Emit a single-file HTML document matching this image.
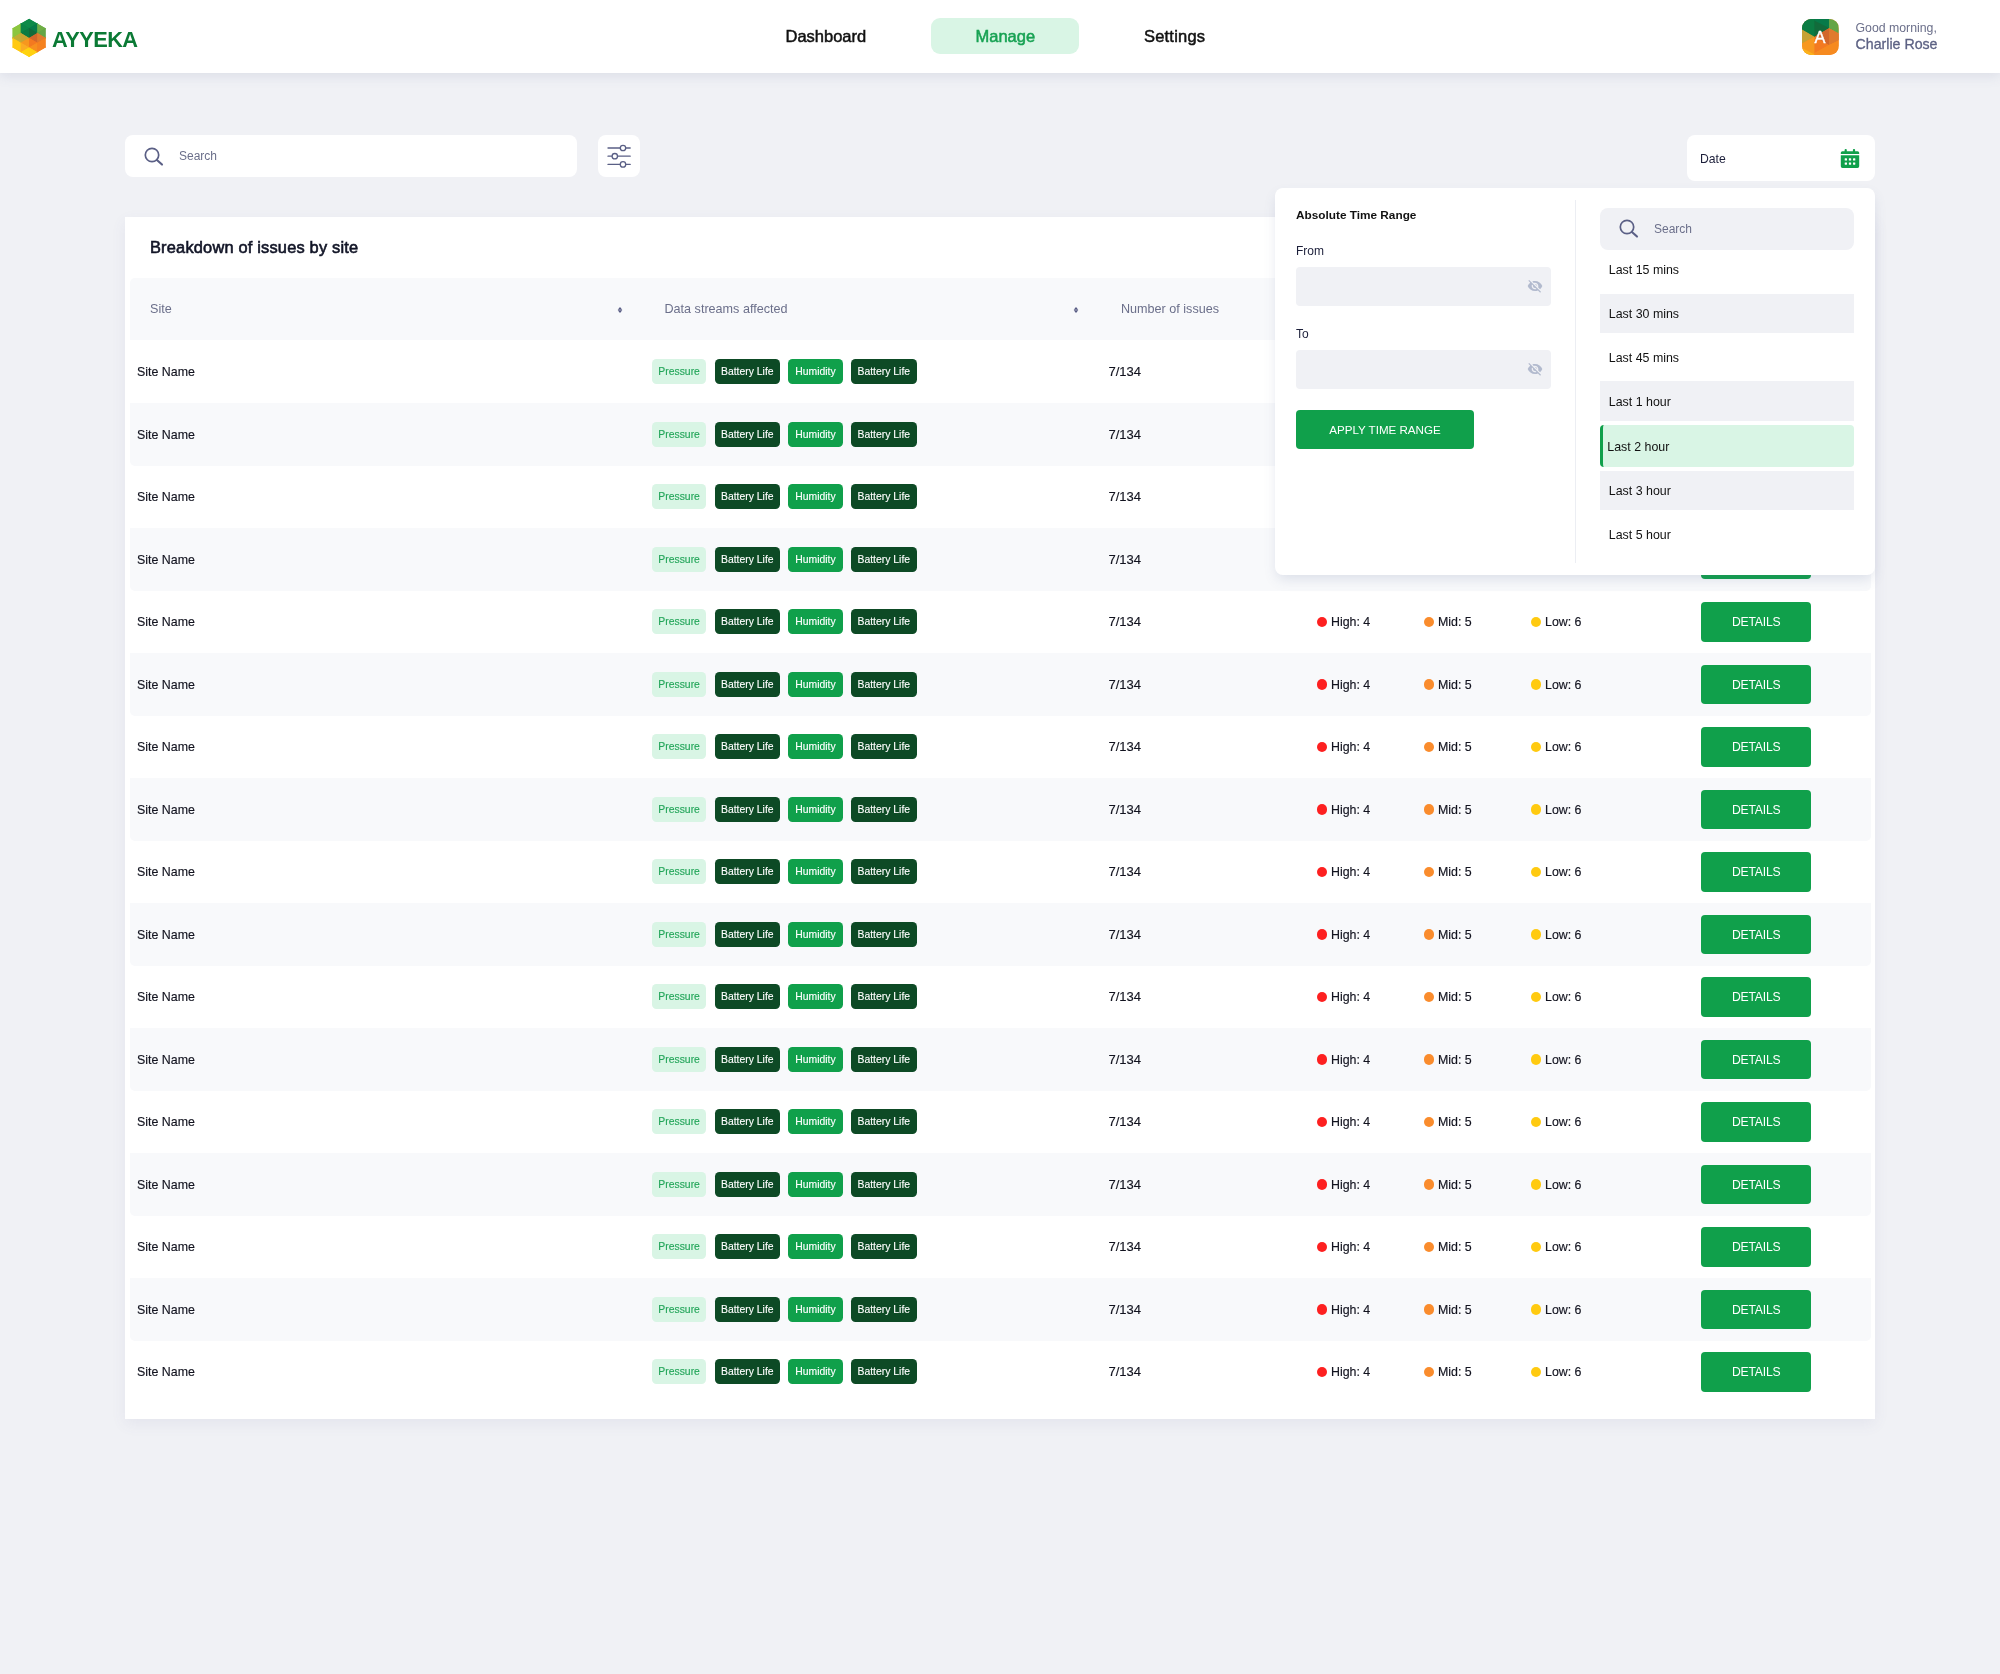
<!DOCTYPE html><html lang="en"><head><meta charset="utf-8"><title>Ayyeka - Manage</title><style>
*{box-sizing:border-box;margin:0;padding:0}
html,body{width:2000px;height:1674px;overflow:hidden}
body{background:#f0f1f5;font-family:"Liberation Sans",sans-serif;color:#15172b;position:relative;font-size:13px}
#app{position:absolute;left:0;top:0;width:2000px;height:1674px;will-change:transform}
.abs{position:absolute}
.t{position:absolute;white-space:nowrap;line-height:1}
#hdr{position:absolute;left:0;top:0;width:2000px;height:73px;background:#fff;box-shadow:0 3px 12px rgba(80,95,140,.13)}
.brand{left:52px;top:29.2px;font-size:21.8px;font-weight:bold;color:#0b7a35;letter-spacing:-.55px}
.nav{font-size:16.5px;color:#111;-webkit-text-stroke:.5px #111;top:28px}
.pill{left:931px;top:18px;width:148px;height:36px;border-radius:9px;background:#d9f5e5}
.avatar{left:1802px;top:18.9px;width:36.6px;height:36.3px;border-radius:9.5px;overflow:hidden}
.gm{left:1855.5px;top:22.4px;font-size:12.3px;color:#6b6f8a}
.nm{left:1855.5px;top:37px;font-size:14.2px;color:#5d6284;-webkit-text-stroke:.3px #5d6284}
.box{position:absolute;background:#fff;border-radius:8px}
.ph{color:#6b6f8a;font-size:12px}
#card{position:absolute;left:125.2px;top:217px;width:1749.4px;height:1202px;background:#fff;box-shadow:0 5px 14px rgba(85,90,150,.08)}
.title{left:150px;top:239px;font-size:16.4px;color:#111426;-webkit-text-stroke:.6px #111426;letter-spacing:.19px}
.thead{position:absolute;left:129.5px;top:277.8px;width:1741px;height:62.7px;background:#f8f9fb;border-radius:5px 5px 0 0}
.th{font-size:12.6px;color:#6b6f8a;top:303.2px}
.row{position:absolute;left:129.5px;width:1741px;height:62.5px}
.row.alt{background:#f8f9fb;border-radius:0 0 5px 5px}
.row .t{top:25.6px;font-size:12.4px;color:#12131f;-webkit-text-stroke:.15px #12131f}
.tag{position:absolute;top:18.8px;height:25px;border-radius:4.5px;font-size:10.4px;line-height:25.4px;-webkit-text-stroke:.12px currentColor;text-align:center;white-space:nowrap}
.tg1{background:#d9f5e5;color:#22a559}
.tg2{background:#0d4a25;color:#fff}
.tg3{background:#10a04b;color:#fff}
.dot{position:absolute;top:26.4px;width:10.4px;height:10.4px;border-radius:50%}
.btn{position:absolute;background:#10a04b;color:#fff;border-radius:4px;text-align:center;white-space:nowrap}
.det{left:1571.5px;top:11.6px;width:110.4px;height:39.6px;line-height:41.8px;font-size:12.2px;letter-spacing:-.2px}
#panel{position:absolute;left:1275px;top:187.6px;width:600px;height:387px;background:#fff;border-radius:8px;box-shadow:0 6px 13px -2px rgba(80,95,140,.17)}
.inp{position:absolute;left:1296px;width:255px;height:39px;border-radius:4px;background:#f0f1f5}
.li{position:absolute;left:1600px;width:254px;height:39.4px}
.li.g{background:#f0f1f5}
.lt{font-size:12.4px;color:#111;left:1608.8px}
</style></head><body><div id="app">
<div id="hdr"></div>
<svg class="abs" style="left:0;top:0" width="60" height="72" viewBox="0 0 60 72"><defs><clipPath id="hx"><polygon points="29.10,18.75 45.68,28.32 45.68,47.47 29.10,57.05 12.52,47.47 12.52,28.32"/></clipPath></defs>
<g clip-path="url(#hx)">
<polygon points="11.13,28.32 21.50,22.34 21.50,34.31" fill="#8cc63f"/>
<polygon points="11.82,27.13 11.82,39.10 22.19,33.11" fill="#8cc63f"/>
<polygon points="11.13,37.90 21.50,31.92 21.50,43.88" fill="#c0ae36"/>
<polygon points="11.82,36.70 11.82,48.67 22.19,42.69" fill="#ffc912"/>
<polygon points="11.13,47.47 21.50,41.49 21.50,53.46" fill="#ffc912"/>
<polygon points="19.43,23.54 29.79,17.55 29.79,29.52" fill="#0d8a48"/>
<polygon points="20.12,22.34 20.12,34.31 30.48,28.32" fill="#0b8446"/>
<polygon points="19.43,33.11 29.79,27.13 29.79,39.10" fill="#0a7a42"/>
<polygon points="20.12,31.92 20.12,43.88 30.48,37.90" fill="#c8a432"/>
<polygon points="19.43,42.69 29.79,36.70 29.79,48.67" fill="#f7971e"/>
<polygon points="20.12,41.49 20.12,53.46 30.48,47.47" fill="#fbac24"/>
<polygon points="19.43,52.26 29.79,46.28 29.79,58.25" fill="#ffd30f"/>
<polygon points="28.41,17.55 28.41,29.52 38.77,23.54" fill="#0d8a48"/>
<polygon points="27.72,28.32 38.08,22.34 38.08,34.31" fill="#077c4a"/>
<polygon points="28.41,27.13 28.41,39.10 38.77,33.11" fill="#126b3b"/>
<polygon points="27.72,37.90 38.08,31.92 38.08,43.88" fill="#d2672b"/>
<polygon points="28.41,36.70 28.41,48.67 38.77,42.69" fill="#f47920"/>
<polygon points="27.72,47.47 38.08,41.49 38.08,53.46" fill="#f78f1f"/>
<polygon points="28.41,46.28 28.41,58.25 38.77,52.26" fill="#ffd011"/>
<polygon points="36.70,22.34 36.70,34.31 47.07,28.32" fill="#6fae45"/>
<polygon points="36.01,33.11 46.38,27.13 46.38,39.10" fill="#65a646"/>
<polygon points="36.70,31.92 36.70,43.88 47.07,37.90" fill="#e07b2e"/>
<polygon points="36.01,42.69 46.38,36.70 46.38,48.67" fill="#f58220"/>
<polygon points="36.70,41.49 36.70,53.46 47.07,47.47" fill="#f58220"/>
<polygon points="12.52,28.32 20.81,23.54 20.81,33.11" fill="#8cc63f"/>
<polygon points="12.52,28.32 12.52,37.90 20.81,33.11" fill="#8cc63f"/>
<polygon points="12.52,37.90 20.81,33.11 20.81,42.69" fill="#c0ae36"/>
<polygon points="12.52,37.90 12.52,47.47 20.81,42.69" fill="#ffc912"/>
<polygon points="12.52,47.47 20.81,42.69 20.81,52.26" fill="#ffc912"/>
<polygon points="20.81,23.54 29.10,18.75 29.10,28.32" fill="#0d8a48"/>
<polygon points="20.81,23.54 20.81,33.11 29.10,28.32" fill="#0b8446"/>
<polygon points="20.81,33.11 29.10,28.32 29.10,37.90" fill="#0a7a42"/>
<polygon points="20.81,33.11 20.81,42.69 29.10,37.90" fill="#c8a432"/>
<polygon points="20.81,42.69 29.10,37.90 29.10,47.47" fill="#f7971e"/>
<polygon points="20.81,42.69 20.81,52.26 29.10,47.47" fill="#fbac24"/>
<polygon points="20.81,52.26 29.10,47.47 29.10,57.05" fill="#ffd30f"/>
<polygon points="29.10,18.75 29.10,28.32 37.39,23.54" fill="#0d8a48"/>
<polygon points="29.10,28.32 37.39,23.54 37.39,33.11" fill="#077c4a"/>
<polygon points="29.10,28.32 29.10,37.90 37.39,33.11" fill="#126b3b"/>
<polygon points="29.10,37.90 37.39,33.11 37.39,42.69" fill="#d2672b"/>
<polygon points="29.10,37.90 29.10,47.47 37.39,42.69" fill="#f47920"/>
<polygon points="29.10,47.47 37.39,42.69 37.39,52.26" fill="#f78f1f"/>
<polygon points="29.10,47.47 29.10,57.05 37.39,52.26" fill="#ffd011"/>
<polygon points="37.39,23.54 37.39,33.11 45.68,28.32" fill="#6fae45"/>
<polygon points="37.39,33.11 45.68,28.32 45.68,37.90" fill="#65a646"/>
<polygon points="37.39,33.11 37.39,42.69 45.68,37.90" fill="#e07b2e"/>
<polygon points="37.39,42.69 45.68,37.90 45.68,47.47" fill="#f58220"/>
<polygon points="37.39,42.69 37.39,52.26 45.68,47.47" fill="#f58220"/>
</g></svg>
<div class="t brand">AYYEKA</div>
<div class="abs pill"></div>
<div class="t nav" id="n1" style="left:785.5px">Dashboard</div>
<div class="t nav" id="n2" style="left:975.5px;color:#17a253;-webkit-text-stroke-color:#17a253">Manage</div>
<div class="t nav" id="n3" style="left:1144px;letter-spacing:.2px">Settings</div>
<div class="abs avatar"><svg width="36.6" height="36.4" viewBox="0 0 36.5 36.5" preserveAspectRatio="none">
<rect width="36.5" height="36.5" fill="#f68a20"/>
<polygon points="0,0 27.2,0 27.2,9.6 12.5,18.2 0,10.9" fill="#0e743f"/>
<polygon points="0,0 12.5,0 12.5,17.9 0,10.6" fill="#0b7c43"/>
<polygon points="12.5,0 26.9,0 26.9,9.4 12.5,1.8" fill="#077a49"/>
<polygon points="12.5,0 12.5,17.9 26.9,9.4 12.5,1.8" fill="#126b3b"/>
<polygon points="26.9,0 36.5,0 36.5,14.5 26.9,9.4" fill="#63a545"/>
<polygon points="0,10.6 12.5,17.9 0,24.5" fill="#c6a233"/>
<polygon points="0,24.5 12.5,17.9 12.5,36.5 0,36.5" fill="#f7981f"/>
<polygon points="0,29 12.5,35.6 12.5,36.5 0,36.5" fill="#fbb31b"/>
<polygon points="12.5,17.9 26.9,9.4 36.5,14.5 36.5,21.2 26.9,26" fill="#d9702c"/>
<polygon points="12.5,17.9 26.9,9.4 26.9,26" fill="#d2672b"/>
<polygon points="26.9,9.4 36.5,14.5 36.5,21.2 26.9,26" fill="#e07a2e"/>
<polygon points="12.5,17.9 26.9,26 12.5,34" fill="#f37a21"/>
<polygon points="12.5,34 26.9,26 36.5,21.2 36.5,36.5 12.5,36.5" fill="#f68a20"/>
</svg></div>
<div class="t" id="avA" style="left:1814.6px;top:28.85px;font-size:16.4px;color:#fff;-webkit-text-stroke:.4px #fff">A</div>
<div class="t gm">Good morning,</div>
<div class="t nm">Charlie Rose</div>
<div class="box" style="left:125px;top:135px;width:452px;height:42px"></div>
<svg class="abs" style="left:142.3px;top:144.6px" width="24" height="24" viewBox="0 0 24 24" fill="none" stroke="#5a5f85" stroke-width="1.7" stroke-linecap="round"><circle cx="10" cy="10" r="6.7"/><path d="M14.9 14.9 20 19.6" stroke-width="2.1"/></svg>
<div class="t ph" style="left:179px;top:150px">Search</div>
<div class="box" style="left:598px;top:135px;width:42px;height:42px"></div>
<svg class="abs" style="left:598px;top:135px" width="42" height="42" viewBox="0 0 42 42" fill="none" stroke="#5a5f85" stroke-width="1.3" stroke-linecap="round">
<path d="M10 13H22M28.2 13H32.2M10 21.2H13.6M20 21.2H32.2M10 29.4H22M28.2 29.4H32.2"/>
<circle cx="25" cy="13" r="2.7" fill="#fff"/><circle cx="16.8" cy="21.2" r="2.7" fill="#fff"/><circle cx="25" cy="29.4" r="2.7" fill="#fff"/></svg>
<div class="box" style="left:1687px;top:135.3px;width:188px;height:45.5px"></div>
<div class="t" style="left:1700px;top:152.9px;font-size:12.2px;color:#1c1f3a">Date</div>
<svg class="abs" style="left:1840px;top:148px" width="20" height="21" viewBox="0 0 20 21">
<g fill="#10a04b"><rect x="4.6" y="1" width="2.2" height="4" rx="1"/><rect x="12.9" y="1" width="2.2" height="4" rx="1"/>
<path d="M2.4 3.2h15.2a1.6 1.6 0 0 1 1.6 1.6v1.3H.8V4.8a1.6 1.6 0 0 1 1.6-1.6z"/>
<path d="M.8 7.35h18.4v10.95a1.7 1.7 0 0 1-1.7 1.7H2.5a1.7 1.7 0 0 1-1.7-1.7z"/></g>
<g fill="#fff"><rect x="4.7" y="10.3" width="2.3" height="2.3" rx=".4"/><rect x="8.85" y="10.3" width="2.3" height="2.3" rx=".4"/><rect x="13" y="10.3" width="2.3" height="2.3" rx=".4"/>
<rect x="4.7" y="14.4" width="2.3" height="2.3" rx=".4"/><rect x="8.85" y="14.4" width="2.3" height="2.3" rx=".4"/><rect x="13" y="14.4" width="2.3" height="2.3" rx=".4"/></g></svg>
<div id="card"></div>
<div class="t title">Breakdown of issues by site</div>
<div class="thead"></div>
<div class="t th" style="left:150px">Site</div><svg class="abs" style="left:615.8px;top:305.5px" width="8" height="8" viewBox="0 0 8 8"><path d="M4 1 6.3 3.65H1.7zM4 7 1.7 4.35h4.6z" fill="#555a82"/></svg>
<div class="t th" style="left:664.5px">Data streams affected</div><svg class="abs" style="left:1071.6px;top:305.5px" width="8" height="8" viewBox="0 0 8 8"><path d="M4 1 6.3 3.65H1.7zM4 7 1.7 4.35h4.6z" fill="#555a82"/></svg>
<div class="t th" style="left:1121px">Number of issues</div>
<div class="row" style="top:340.50px"><div class="t" style="left:7.5px">Site Name</div><div class="tag tg1" style="left:522.7px;width:53.8px">Pressure</div><div class="tag tg2" style="left:585px;width:65.6px">Battery Life</div><div class="tag tg3" style="left:658.8px;width:54.3px">Humidity</div><div class="tag tg2" style="left:721.5px;width:65.6px">Battery Life</div><div class="t" style="left:979px;font-size:13px;top:24.6px">7/134</div><div class="dot" style="left:1187px;background:#fd2020"></div><div class="t" style="left:1201.5px">High: 4</div><div class="dot" style="left:1294px;background:#fa8c2d"></div><div class="t" style="left:1308.5px">Mid: 5</div><div class="dot" style="left:1401px;background:#ffca10"></div><div class="t" style="left:1415.5px">Low: 6</div><div class="btn det">DETAILS</div></div>
<div class="row alt" style="top:403.00px"><div class="t" style="left:7.5px">Site Name</div><div class="tag tg1" style="left:522.7px;width:53.8px">Pressure</div><div class="tag tg2" style="left:585px;width:65.6px">Battery Life</div><div class="tag tg3" style="left:658.8px;width:54.3px">Humidity</div><div class="tag tg2" style="left:721.5px;width:65.6px">Battery Life</div><div class="t" style="left:979px;font-size:13px;top:24.6px">7/134</div><div class="dot" style="left:1187px;background:#fd2020"></div><div class="t" style="left:1201.5px">High: 4</div><div class="dot" style="left:1294px;background:#fa8c2d"></div><div class="t" style="left:1308.5px">Mid: 5</div><div class="dot" style="left:1401px;background:#ffca10"></div><div class="t" style="left:1415.5px">Low: 6</div><div class="btn det">DETAILS</div></div>
<div class="row" style="top:465.50px"><div class="t" style="left:7.5px">Site Name</div><div class="tag tg1" style="left:522.7px;width:53.8px">Pressure</div><div class="tag tg2" style="left:585px;width:65.6px">Battery Life</div><div class="tag tg3" style="left:658.8px;width:54.3px">Humidity</div><div class="tag tg2" style="left:721.5px;width:65.6px">Battery Life</div><div class="t" style="left:979px;font-size:13px;top:24.6px">7/134</div><div class="dot" style="left:1187px;background:#fd2020"></div><div class="t" style="left:1201.5px">High: 4</div><div class="dot" style="left:1294px;background:#fa8c2d"></div><div class="t" style="left:1308.5px">Mid: 5</div><div class="dot" style="left:1401px;background:#ffca10"></div><div class="t" style="left:1415.5px">Low: 6</div><div class="btn det">DETAILS</div></div>
<div class="row alt" style="top:528.00px"><div class="t" style="left:7.5px">Site Name</div><div class="tag tg1" style="left:522.7px;width:53.8px">Pressure</div><div class="tag tg2" style="left:585px;width:65.6px">Battery Life</div><div class="tag tg3" style="left:658.8px;width:54.3px">Humidity</div><div class="tag tg2" style="left:721.5px;width:65.6px">Battery Life</div><div class="t" style="left:979px;font-size:13px;top:24.6px">7/134</div><div class="dot" style="left:1187px;background:#fd2020"></div><div class="t" style="left:1201.5px">High: 4</div><div class="dot" style="left:1294px;background:#fa8c2d"></div><div class="t" style="left:1308.5px">Mid: 5</div><div class="dot" style="left:1401px;background:#ffca10"></div><div class="t" style="left:1415.5px">Low: 6</div><div class="btn det">DETAILS</div></div>
<div class="row" style="top:590.50px"><div class="t" style="left:7.5px">Site Name</div><div class="tag tg1" style="left:522.7px;width:53.8px">Pressure</div><div class="tag tg2" style="left:585px;width:65.6px">Battery Life</div><div class="tag tg3" style="left:658.8px;width:54.3px">Humidity</div><div class="tag tg2" style="left:721.5px;width:65.6px">Battery Life</div><div class="t" style="left:979px;font-size:13px;top:24.6px">7/134</div><div class="dot" style="left:1187px;background:#fd2020"></div><div class="t" style="left:1201.5px">High: 4</div><div class="dot" style="left:1294px;background:#fa8c2d"></div><div class="t" style="left:1308.5px">Mid: 5</div><div class="dot" style="left:1401px;background:#ffca10"></div><div class="t" style="left:1415.5px">Low: 6</div><div class="btn det">DETAILS</div></div>
<div class="row alt" style="top:653.00px"><div class="t" style="left:7.5px">Site Name</div><div class="tag tg1" style="left:522.7px;width:53.8px">Pressure</div><div class="tag tg2" style="left:585px;width:65.6px">Battery Life</div><div class="tag tg3" style="left:658.8px;width:54.3px">Humidity</div><div class="tag tg2" style="left:721.5px;width:65.6px">Battery Life</div><div class="t" style="left:979px;font-size:13px;top:24.6px">7/134</div><div class="dot" style="left:1187px;background:#fd2020"></div><div class="t" style="left:1201.5px">High: 4</div><div class="dot" style="left:1294px;background:#fa8c2d"></div><div class="t" style="left:1308.5px">Mid: 5</div><div class="dot" style="left:1401px;background:#ffca10"></div><div class="t" style="left:1415.5px">Low: 6</div><div class="btn det">DETAILS</div></div>
<div class="row" style="top:715.50px"><div class="t" style="left:7.5px">Site Name</div><div class="tag tg1" style="left:522.7px;width:53.8px">Pressure</div><div class="tag tg2" style="left:585px;width:65.6px">Battery Life</div><div class="tag tg3" style="left:658.8px;width:54.3px">Humidity</div><div class="tag tg2" style="left:721.5px;width:65.6px">Battery Life</div><div class="t" style="left:979px;font-size:13px;top:24.6px">7/134</div><div class="dot" style="left:1187px;background:#fd2020"></div><div class="t" style="left:1201.5px">High: 4</div><div class="dot" style="left:1294px;background:#fa8c2d"></div><div class="t" style="left:1308.5px">Mid: 5</div><div class="dot" style="left:1401px;background:#ffca10"></div><div class="t" style="left:1415.5px">Low: 6</div><div class="btn det">DETAILS</div></div>
<div class="row alt" style="top:778.00px"><div class="t" style="left:7.5px">Site Name</div><div class="tag tg1" style="left:522.7px;width:53.8px">Pressure</div><div class="tag tg2" style="left:585px;width:65.6px">Battery Life</div><div class="tag tg3" style="left:658.8px;width:54.3px">Humidity</div><div class="tag tg2" style="left:721.5px;width:65.6px">Battery Life</div><div class="t" style="left:979px;font-size:13px;top:24.6px">7/134</div><div class="dot" style="left:1187px;background:#fd2020"></div><div class="t" style="left:1201.5px">High: 4</div><div class="dot" style="left:1294px;background:#fa8c2d"></div><div class="t" style="left:1308.5px">Mid: 5</div><div class="dot" style="left:1401px;background:#ffca10"></div><div class="t" style="left:1415.5px">Low: 6</div><div class="btn det">DETAILS</div></div>
<div class="row" style="top:840.50px"><div class="t" style="left:7.5px">Site Name</div><div class="tag tg1" style="left:522.7px;width:53.8px">Pressure</div><div class="tag tg2" style="left:585px;width:65.6px">Battery Life</div><div class="tag tg3" style="left:658.8px;width:54.3px">Humidity</div><div class="tag tg2" style="left:721.5px;width:65.6px">Battery Life</div><div class="t" style="left:979px;font-size:13px;top:24.6px">7/134</div><div class="dot" style="left:1187px;background:#fd2020"></div><div class="t" style="left:1201.5px">High: 4</div><div class="dot" style="left:1294px;background:#fa8c2d"></div><div class="t" style="left:1308.5px">Mid: 5</div><div class="dot" style="left:1401px;background:#ffca10"></div><div class="t" style="left:1415.5px">Low: 6</div><div class="btn det">DETAILS</div></div>
<div class="row alt" style="top:903.00px"><div class="t" style="left:7.5px">Site Name</div><div class="tag tg1" style="left:522.7px;width:53.8px">Pressure</div><div class="tag tg2" style="left:585px;width:65.6px">Battery Life</div><div class="tag tg3" style="left:658.8px;width:54.3px">Humidity</div><div class="tag tg2" style="left:721.5px;width:65.6px">Battery Life</div><div class="t" style="left:979px;font-size:13px;top:24.6px">7/134</div><div class="dot" style="left:1187px;background:#fd2020"></div><div class="t" style="left:1201.5px">High: 4</div><div class="dot" style="left:1294px;background:#fa8c2d"></div><div class="t" style="left:1308.5px">Mid: 5</div><div class="dot" style="left:1401px;background:#ffca10"></div><div class="t" style="left:1415.5px">Low: 6</div><div class="btn det">DETAILS</div></div>
<div class="row" style="top:965.50px"><div class="t" style="left:7.5px">Site Name</div><div class="tag tg1" style="left:522.7px;width:53.8px">Pressure</div><div class="tag tg2" style="left:585px;width:65.6px">Battery Life</div><div class="tag tg3" style="left:658.8px;width:54.3px">Humidity</div><div class="tag tg2" style="left:721.5px;width:65.6px">Battery Life</div><div class="t" style="left:979px;font-size:13px;top:24.6px">7/134</div><div class="dot" style="left:1187px;background:#fd2020"></div><div class="t" style="left:1201.5px">High: 4</div><div class="dot" style="left:1294px;background:#fa8c2d"></div><div class="t" style="left:1308.5px">Mid: 5</div><div class="dot" style="left:1401px;background:#ffca10"></div><div class="t" style="left:1415.5px">Low: 6</div><div class="btn det">DETAILS</div></div>
<div class="row alt" style="top:1028.00px"><div class="t" style="left:7.5px">Site Name</div><div class="tag tg1" style="left:522.7px;width:53.8px">Pressure</div><div class="tag tg2" style="left:585px;width:65.6px">Battery Life</div><div class="tag tg3" style="left:658.8px;width:54.3px">Humidity</div><div class="tag tg2" style="left:721.5px;width:65.6px">Battery Life</div><div class="t" style="left:979px;font-size:13px;top:24.6px">7/134</div><div class="dot" style="left:1187px;background:#fd2020"></div><div class="t" style="left:1201.5px">High: 4</div><div class="dot" style="left:1294px;background:#fa8c2d"></div><div class="t" style="left:1308.5px">Mid: 5</div><div class="dot" style="left:1401px;background:#ffca10"></div><div class="t" style="left:1415.5px">Low: 6</div><div class="btn det">DETAILS</div></div>
<div class="row" style="top:1090.50px"><div class="t" style="left:7.5px">Site Name</div><div class="tag tg1" style="left:522.7px;width:53.8px">Pressure</div><div class="tag tg2" style="left:585px;width:65.6px">Battery Life</div><div class="tag tg3" style="left:658.8px;width:54.3px">Humidity</div><div class="tag tg2" style="left:721.5px;width:65.6px">Battery Life</div><div class="t" style="left:979px;font-size:13px;top:24.6px">7/134</div><div class="dot" style="left:1187px;background:#fd2020"></div><div class="t" style="left:1201.5px">High: 4</div><div class="dot" style="left:1294px;background:#fa8c2d"></div><div class="t" style="left:1308.5px">Mid: 5</div><div class="dot" style="left:1401px;background:#ffca10"></div><div class="t" style="left:1415.5px">Low: 6</div><div class="btn det">DETAILS</div></div>
<div class="row alt" style="top:1153.00px"><div class="t" style="left:7.5px">Site Name</div><div class="tag tg1" style="left:522.7px;width:53.8px">Pressure</div><div class="tag tg2" style="left:585px;width:65.6px">Battery Life</div><div class="tag tg3" style="left:658.8px;width:54.3px">Humidity</div><div class="tag tg2" style="left:721.5px;width:65.6px">Battery Life</div><div class="t" style="left:979px;font-size:13px;top:24.6px">7/134</div><div class="dot" style="left:1187px;background:#fd2020"></div><div class="t" style="left:1201.5px">High: 4</div><div class="dot" style="left:1294px;background:#fa8c2d"></div><div class="t" style="left:1308.5px">Mid: 5</div><div class="dot" style="left:1401px;background:#ffca10"></div><div class="t" style="left:1415.5px">Low: 6</div><div class="btn det">DETAILS</div></div>
<div class="row" style="top:1215.50px"><div class="t" style="left:7.5px">Site Name</div><div class="tag tg1" style="left:522.7px;width:53.8px">Pressure</div><div class="tag tg2" style="left:585px;width:65.6px">Battery Life</div><div class="tag tg3" style="left:658.8px;width:54.3px">Humidity</div><div class="tag tg2" style="left:721.5px;width:65.6px">Battery Life</div><div class="t" style="left:979px;font-size:13px;top:24.6px">7/134</div><div class="dot" style="left:1187px;background:#fd2020"></div><div class="t" style="left:1201.5px">High: 4</div><div class="dot" style="left:1294px;background:#fa8c2d"></div><div class="t" style="left:1308.5px">Mid: 5</div><div class="dot" style="left:1401px;background:#ffca10"></div><div class="t" style="left:1415.5px">Low: 6</div><div class="btn det">DETAILS</div></div>
<div class="row alt" style="top:1278.00px"><div class="t" style="left:7.5px">Site Name</div><div class="tag tg1" style="left:522.7px;width:53.8px">Pressure</div><div class="tag tg2" style="left:585px;width:65.6px">Battery Life</div><div class="tag tg3" style="left:658.8px;width:54.3px">Humidity</div><div class="tag tg2" style="left:721.5px;width:65.6px">Battery Life</div><div class="t" style="left:979px;font-size:13px;top:24.6px">7/134</div><div class="dot" style="left:1187px;background:#fd2020"></div><div class="t" style="left:1201.5px">High: 4</div><div class="dot" style="left:1294px;background:#fa8c2d"></div><div class="t" style="left:1308.5px">Mid: 5</div><div class="dot" style="left:1401px;background:#ffca10"></div><div class="t" style="left:1415.5px">Low: 6</div><div class="btn det">DETAILS</div></div>
<div class="row" style="top:1340.50px"><div class="t" style="left:7.5px">Site Name</div><div class="tag tg1" style="left:522.7px;width:53.8px">Pressure</div><div class="tag tg2" style="left:585px;width:65.6px">Battery Life</div><div class="tag tg3" style="left:658.8px;width:54.3px">Humidity</div><div class="tag tg2" style="left:721.5px;width:65.6px">Battery Life</div><div class="t" style="left:979px;font-size:13px;top:24.6px">7/134</div><div class="dot" style="left:1187px;background:#fd2020"></div><div class="t" style="left:1201.5px">High: 4</div><div class="dot" style="left:1294px;background:#fa8c2d"></div><div class="t" style="left:1308.5px">Mid: 5</div><div class="dot" style="left:1401px;background:#ffca10"></div><div class="t" style="left:1415.5px">Low: 6</div><div class="btn det">DETAILS</div></div>
<div id="panel"></div>
<div class="abs" style="left:1575px;top:200px;width:1px;height:363px;background:#eceef3"></div>
<div class="t" style="left:1296px;top:209.5px;font-size:11.8px;font-weight:bold;color:#111">Absolute Time Range</div>
<div class="t" style="left:1296px;top:245px;font-size:12px;color:#1c1f3a">From</div>
<div class="inp" style="top:266.6px"></div><svg class="abs" style="left:1526.9px;top:277.6px" width="16" height="16" viewBox="0 0 24 24"><path fill="#b2bace" d="M12 7c2.76 0 5 2.24 5 5 0 .65-.13 1.26-.36 1.83l2.92 2.92c1.51-1.26 2.7-2.89 3.43-4.75-1.73-4.39-6-7.5-11-7.5-1.4 0-2.74.25-3.98.7l2.16 2.16C10.74 7.13 11.35 7 12 7zM2 4.27l2.28 2.28.46.46C3.08 8.3 1.78 10.02 1 12c1.73 4.39 6 7.5 11 7.5 1.55 0 3.03-.3 4.38-.84l.42.42L19.73 22 21 20.73 3.27 3 2 4.27zM7.53 9.8l1.55 1.55c-.05.21-.08.43-.08.65 0 1.66 1.34 3 3 3 .22 0 .44-.03.65-.08l1.55 1.55c-.67.33-1.41.53-2.2.53-2.76 0-5-2.24-5-5 0-.79.2-1.53.53-2.2zm4.31-.78 3.15 3.15.02-.16c0-1.66-1.34-3-3-3l-.17.01z"/></svg>
<div class="t" style="left:1296px;top:328px;font-size:12px;color:#1c1f3a">To</div>
<div class="inp" style="top:349.6px"></div><svg class="abs" style="left:1526.9px;top:360.6px" width="16" height="16" viewBox="0 0 24 24"><path fill="#b2bace" d="M12 7c2.76 0 5 2.24 5 5 0 .65-.13 1.26-.36 1.83l2.92 2.92c1.51-1.26 2.7-2.89 3.43-4.75-1.73-4.39-6-7.5-11-7.5-1.4 0-2.74.25-3.98.7l2.16 2.16C10.74 7.13 11.35 7 12 7zM2 4.27l2.28 2.28.46.46C3.08 8.3 1.78 10.02 1 12c1.73 4.39 6 7.5 11 7.5 1.55 0 3.03-.3 4.38-.84l.42.42L19.73 22 21 20.73 3.27 3 2 4.27zM7.53 9.8l1.55 1.55c-.05.21-.08.43-.08.65 0 1.66 1.34 3 3 3 .22 0 .44-.03.65-.08l1.55 1.55c-.67.33-1.41.53-2.2.53-2.76 0-5-2.24-5-5 0-.79.2-1.53.53-2.2zm4.31-.78 3.15 3.15.02-.16c0-1.66-1.34-3-3-3l-.17.01z"/></svg>
<div class="btn" style="left:1296px;top:410px;width:178px;height:39px;line-height:39px;font-size:11.6px">APPLY TIME RANGE</div>
<div class="box" style="left:1600px;top:208px;width:254px;height:41.8px;background:#f0f1f5"></div>
<svg class="abs" style="left:1617.3px;top:217.3px" width="24" height="24" viewBox="0 0 24 24" fill="none" stroke="#5a5f85" stroke-width="1.7" stroke-linecap="round"><circle cx="10" cy="10" r="6.7"/><path d="M14.9 14.9 20 19.6" stroke-width="2.1"/></svg>
<div class="t ph" style="left:1654px;top:222.5px">Search</div>
<div class="li " style="top:250px;height:39.4px"></div>
<div class="t lt" style="top:264.3px">Last 15 mins</div>
<div class="li g" style="top:293.8px;height:39.4px"></div>
<div class="t lt" style="top:308.1px">Last 30 mins</div>
<div class="li " style="top:337.5px;height:39.4px"></div>
<div class="t lt" style="top:351.8px">Last 45 mins</div>
<div class="li g" style="top:381.2px;height:39.4px"></div>
<div class="t lt" style="top:395.5px">Last 1 hour</div>
<div class="li" style="top:425.2px;height:41.4px;background:#d9f5e5;border-radius:4px;border-left:3px solid #10a04b"></div>
<div class="t lt" style="left:1607.3px;top:440.5px">Last 2 hour</div>
<div class="li g" style="top:471px;height:39.4px"></div>
<div class="t lt" style="top:485.3px">Last 3 hour</div>
<div class="li " style="top:514.8px;height:39.4px"></div>
<div class="t lt" style="top:529.1px">Last 5 hour</div>
</div></body></html>
